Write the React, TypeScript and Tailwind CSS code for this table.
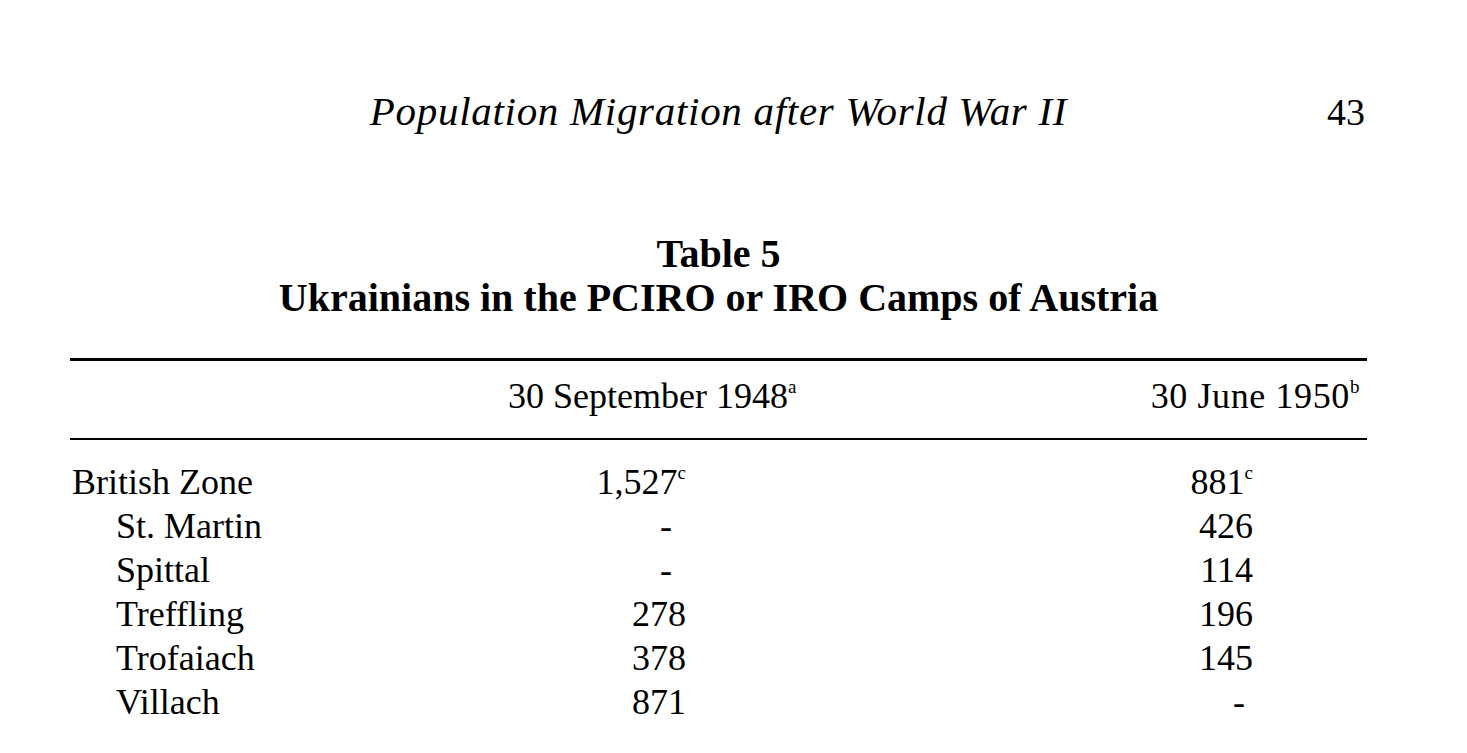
const rows = [
  { name: "British Zone", sep: "1,527", sepNote: "c", jun: "881", junNote: "c", indent: false },
  { name: "St. Martin", sep: "-", jun: "426", indent: true },
  { name: "Spittal", sep: "-", jun: "114", indent: true },
  { name: "Treffling", sep: "278", jun: "196", indent: true },
  { name: "Trofaiach", sep: "378", jun: "145", indent: true },
  { name: "Villach", sep: "871", jun: "-", indent: true },
];

function Cell({ value, note, pad, dashPad }: { value: string; note?: string; pad: string; dashPad: string }) {
  const dash = value === "-";
  return (
    <div className={`text-right ${pad}`}>
      <span className={dash ? dashPad : ""}>{value}</span>
      {note && <sup className="text-[19px] top-[-15px]">{note}</sup>}
    </div>
  );
}

export default function App() {
  return (
    <div className="min-h-screen bg-white text-black font-['Liberation_Serif',serif]">
      <div className="ml-[70px] w-[1297px] pt-[87px]">
        {/* Running head */}
        <div className="grid grid-cols-[1fr_auto_1fr] items-baseline leading-[48px]">
          <div />
          <div className="italic text-[41px] tracking-[0.7px]">Population Migration after World War II</div>
          <div className="text-right text-[38px] pr-[2px]">43</div>
        </div>

        {/* Caption */}
        <div className="mt-[96px] text-center font-bold text-[40px] leading-[44px]">
          <div>Table 5</div>
          <div>Ukrainians in the PCIRO or IRO Camps of Austria</div>
        </div>

        {/* Table */}
        <div className="mt-[38px] border-t-[3px] border-black" />
        <div className="grid grid-cols-[438px_294px_565px] text-[36px] leading-[44px] pt-[13px] pb-[20px]">
          <div />
          <div>
            30 September 1948<sup className="text-[19px] top-[-15px]">a</sup>
          </div>
          <div className="text-right pr-[7px] tracking-[0.6px]">
            30 June 1950<sup className="text-[19px] top-[-15px]">b</sup>
          </div>
        </div>
        <div className="border-t-[2px] border-black" />

        <div className="pt-[20px] text-[36px] leading-[44px]">
          {rows.map((r) => (
            <div key={r.name} className="grid grid-cols-[438px_294px_565px]">
              <div className={r.indent ? "pl-[46px]" : "pl-[2px]"}>{r.name}</div>
              <Cell value={r.sep} note={r.sepNote} pad="pr-[116px]" dashPad="pr-[14px]" />
              <Cell value={r.jun} note={r.junNote} pad="pr-[114px]" dashPad="pr-[8px]" />
            </div>
          ))}
        </div>
      </div>
    </div>
  );
}
